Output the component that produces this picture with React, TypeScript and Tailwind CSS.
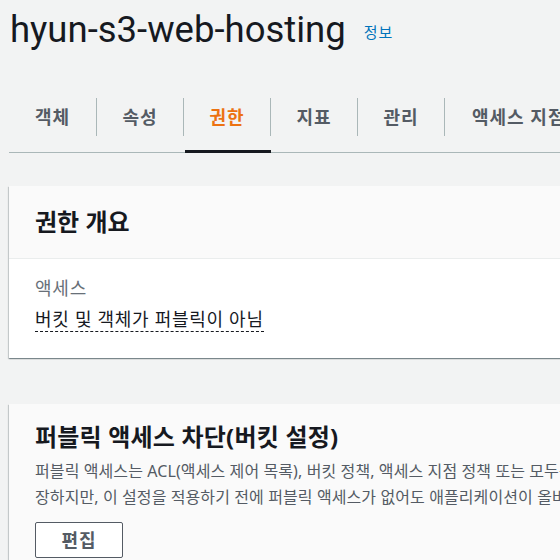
const tabs = ["객체", "속성", "권한", "지표", "관리", "액세스 지점"];

const font = { fontFamily: '"Noto Sans", "Noto Sans CJK KR", sans-serif' };

const cardShadow =
  "shadow-[0_1px_1px_0_rgba(0,28,36,0.3),1px_1px_1px_0_rgba(0,28,36,0.15),-1px_1px_1px_0_rgba(0,28,36,0.15)]";

function Tabs() {
  return (
    <div className="ml-[9px] flex w-[700px] border-b border-[#aab7b8]">
      {tabs.map((t, i) => {
        const active = t === "권한";
        const last = i === tabs.length - 1;
        return (
          <div key={t} className="relative shrink-0 pt-[12px] pb-[16px]">
            <div
              className={
                "flex h-[38px] items-center justify-center whitespace-nowrap text-[18px] font-bold tracking-[1px] " +
                (last ? "pl-[27px] " : "border-r border-[#aab7b8] ") +
                (i === 0 ? "w-[88px] " : last ? "" : "w-[87px] ") +
                (active ? "text-[#ec7211]" : "text-[#545b64]")
              }
            >
              {t}
            </div>
            {active && (
              <div className="absolute right-0 -bottom-[1px] left-[1px] h-[3px] bg-[#16191f]" />
            )}
          </div>
        );
      })}
    </div>
  );
}

export default function App() {
  return (
    <div className="h-[560px] w-[560px] overflow-hidden bg-[#f2f3f3] text-[#16191f]" style={font}>
      <div className="flex items-center gap-[18px] pt-[6px] pl-[10px]">
        <h1
          className="whitespace-nowrap text-[36.5px] leading-[48px]"
          style={{ fontFamily: 'Roboto, "Noto Sans CJK KR", sans-serif' }}
        >
          hyun-s3-web-hosting
        </h1>
        <a className="mt-[4px] text-[15px] tracking-[1px] text-[#0073bb]">정보</a>
      </div>

      <div className="mt-[32px]">
        <Tabs />
      </div>

      <div className={"ml-[9px] mt-[33px] w-[700px] bg-white " + cardShadow}>
        <div className="flex h-[73px] items-center border-b border-[#eaeded] bg-[#fafafa] px-[26px]">
          <h2 className="text-[24px] font-bold leading-[32px]">권한 개요</h2>
        </div>
        <div className="px-[26px] pt-[17px] pb-[26px]">
          <div className="text-[18px] leading-[24px] tracking-[0.8px] text-[#687078]">액세스</div>
          <div className="mt-[7px] inline-block border-b border-dashed border-[#16191f] text-[18px] leading-[24px] tracking-[0.7px]">
            버킷 및 객체가 퍼블릭이 아님
          </div>
        </div>
      </div>

      <div className={"ml-[9px] mt-[46px] w-[700px] bg-[#fafafa] " + cardShadow}>
        <div className="px-[26px] pt-[17px] pb-[20px]">
          <h2 className="text-[24px] font-bold leading-[32px] tracking-[0.2px]">퍼블릭 액세스 차단(버킷 설정)</h2>
          <div className="mt-[5px] text-[16px] leading-[26px] tracking-[0.1px] text-[#545b64]">
            <p className="whitespace-nowrap">
              퍼블릭 액세스는 ACL(액세스 제어 목록), 버킷 정책, 액세스 지점 정책 또는 모두를 통해 버킷 및 객체에 부여됩니다.
            </p>
            <p className="whitespace-nowrap">
              장하지만, 이 설정을 적용하기 전에 퍼블릭 액세스가 없어도 애플리케이션이 올바르게 작동하는지 확인합니다.
            </p>
          </div>
          <button className="mt-[12px] h-[36px] w-[88px] rounded-[2px] border border-[#545b64] bg-white text-[18px] font-bold tracking-[1px] text-[#545b64]">
            편집
          </button>
        </div>
      </div>
    </div>
  );
}
